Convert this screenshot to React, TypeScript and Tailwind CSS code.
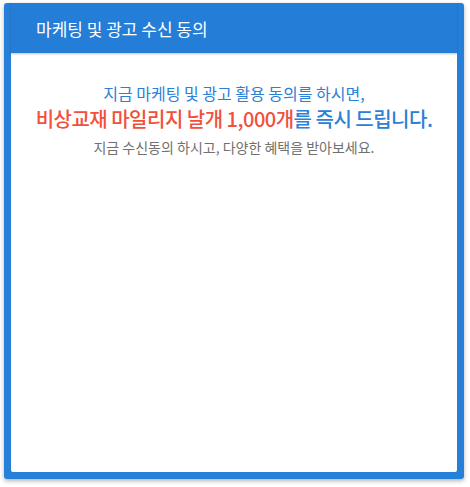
import React from "react";

export default function App() {
  return (
    <div className="w-[470px] h-[487px] bg-white pt-[3px] pl-[4px]" style={{ fontFamily: '"Noto Sans CJK KR", "Noto Sans", sans-serif' }}>
      <div className="w-[460px] h-[476px] rounded-[3px] bg-[#2680d9] shadow-[0_2px_4px_rgba(0,0,0,0.3)] flex flex-col px-[7px] pb-[7px]">
        <div className="h-[50px] shrink-0 flex items-center pl-[25px] bg-[#247dd7] shadow-[0_1px_2px_rgba(0,0,0,0.25)] relative z-10">
          <span className="text-white text-[17px] leading-none">마케팅 및 광고 수신 동의</span>
        </div>
        <div className="flex-1 bg-white rounded-b-[2px] flex flex-col items-center pt-[27px]">
          <p className="text-[#2b80d8] text-[16px] leading-[26px]">지금 마케팅 및 광고 활용 동의를 하시면,</p>
          <p className="text-[20px] leading-[26px] font-medium tracking-[-0.5px]">
            <span className="text-[#f2503c]">비상교재 마일리지 날개 1,000개</span>
            <span className="text-[#2b80d8]">를 즉시 드립니다.</span>
          </p>
          <p className="text-[#707070] text-[14px] leading-[20px] mt-[5px]">지금 수신동의 하시고, 다양한 혜택을 받아보세요.</p>
        </div>
      </div>
    </div>
  );
}
